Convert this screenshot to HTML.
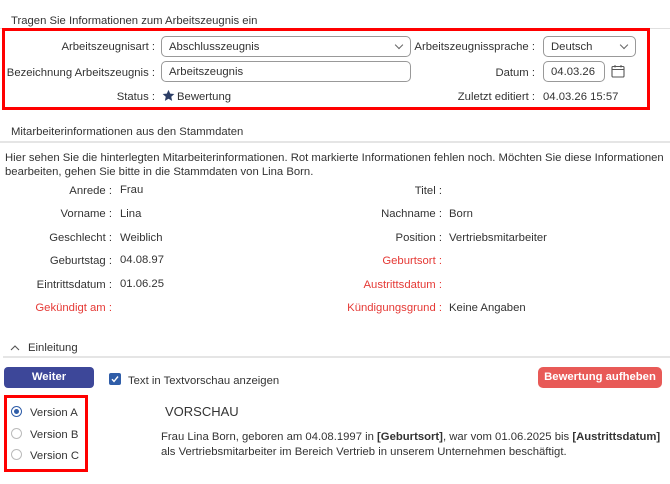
<!DOCTYPE html>
<html><head><meta charset="utf-8"><style>
*{box-sizing:border-box;margin:0;padding:0}
body{width:670px;height:484px;background:#fff;font-family:"Liberation Sans",Arial,sans-serif;font-size:11.3px;color:#333;position:relative;overflow:hidden}
.a{position:absolute;white-space:nowrap;line-height:14px}
.r{text-align:right}
.red{color:#e53935}
.box{position:absolute;border:1px solid #999;border-radius:5px;background:#fff;padding-left:7px;line-height:20px;font-size:11.3px;color:#333}
.chev{position:absolute;right:8px;top:5px;width:6px;height:6px;border-right:1px solid #666;border-bottom:1px solid #666;transform:rotate(45deg)}
.line{position:absolute;height:2px;background:#e5e5e5}
.rb{position:absolute;border:3px solid #f00}
.radio{position:absolute;width:11px;height:11px;border:1px solid #bbb;border-radius:50%;left:11px}
</style></head><body>
<div class="a" style="left:11px;top:14px">Tragen Sie Informationen zum Arbeitszeugnis ein</div>
<div class="line" style="left:0;top:28px;width:670px;height:1px;background:#e0e0e0"></div>
<div class="rb" style="left:2px;top:28px;width:648px;height:82px;background:#fff"></div>

<div class="a r" style="right:515px;top:40px">Arbeitszeugnisart :</div>
<div class="box" style="left:161px;top:36px;width:250px;height:21px">Abschlusszeugnis<span class="chev"></span></div>
<div class="a r" style="right:135px;top:40px">Arbeitszeugnissprache :</div>
<div class="box" style="left:543px;top:36px;width:93px;height:21px">Deutsch<span class="chev"></span></div>

<div class="a r" style="right:515px;top:66px">Bezeichnung Arbeitszeugnis :</div>
<div class="box" style="left:161px;top:61px;width:250px;height:21px">Arbeitszeugnis</div>
<div class="a r" style="right:135px;top:66px">Datum :</div>
<div class="box" style="left:543px;top:61px;width:62px;height:21px">04.03.26</div>
<svg style="position:absolute;left:611px;top:64px" width="14" height="14" viewBox="0 0 14 14"><rect x="1" y="2.5" width="12" height="10.5" rx="1" fill="none" stroke="#555" stroke-width="1.1"/><line x1="1" y1="5.5" x2="13" y2="5.5" stroke="#555"/><line x1="4" y1="1" x2="4" y2="3.5" stroke="#555"/><line x1="10" y1="1" x2="10" y2="3.5" stroke="#555"/></svg>

<div class="a r" style="right:515px;top:90px">Status :</div>
<svg style="position:absolute;left:162px;top:89px" width="13" height="13" viewBox="0 0 24 24"><path d="M12 1.5l3.2 7 7.6.8-5.7 5.1 1.6 7.5L12 18l-6.7 3.9 1.6-7.5L1.2 9.3l7.6-.8z" fill="#2c3e66"/></svg>
<div class="a" style="left:177px;top:90px">Bewertung</div>
<div class="a r" style="right:135px;top:90px">Zuletzt editiert :</div>
<div class="a" style="left:543px;top:90px">04.03.26 15:57</div>

<div class="a" style="left:11px;top:125px">Mitarbeiterinformationen aus den Stammdaten</div>
<div class="line" style="left:0;top:141px;width:670px"></div>
<div class="a" style="left:5px;top:151px">Hier sehen Sie die hinterlegten Mitarbeiterinformationen. Rot markierte Informationen fehlen noch. Möchten Sie diese Informationen</div>
<div class="a" style="left:5px;top:165px">bearbeiten, gehen Sie bitte in die Stammdaten von Lina Born.</div>

<div class="a r" style="right:558px;top:184px">Anrede :</div><div class="a" style="left:120px;top:183px">Frau</div>
<div class="a r" style="right:228px;top:184px">Titel :</div>
<div class="a r" style="right:558px;top:207px">Vorname :</div><div class="a" style="left:120px;top:207px">Lina</div>
<div class="a r" style="right:228px;top:207px">Nachname :</div><div class="a" style="left:449px;top:207px">Born</div>
<div class="a r" style="right:558px;top:231px">Geschlecht :</div><div class="a" style="left:120px;top:231px">Weiblich</div>
<div class="a r" style="right:228px;top:231px">Position :</div><div class="a" style="left:449px;top:231px">Vertriebsmitarbeiter</div>
<div class="a r" style="right:558px;top:254px">Geburtstag :</div><div class="a" style="left:120px;top:253px">04.08.97</div>
<div class="a r red" style="right:228px;top:254px">Geburtsort :</div>
<div class="a r" style="right:558px;top:278px">Eintrittsdatum :</div><div class="a" style="left:120px;top:277px">01.06.25</div>
<div class="a r red" style="right:228px;top:278px">Austrittsdatum :</div>
<div class="a r red" style="right:558px;top:301px">Gekündigt am :</div>
<div class="a r red" style="right:228px;top:301px">Kündigungsgrund :</div><div class="a" style="left:449px;top:301px">Keine Angaben</div>

<svg style="position:absolute;left:10px;top:344px" width="10" height="7" viewBox="0 0 10 7"><path d="M1 6L5 2l4 4" fill="none" stroke="#555" stroke-width="1.1"/></svg>
<div class="a" style="left:28px;top:341px">Einleitung</div>
<div class="line" style="left:3px;top:356px;width:667px"></div>

<div style="position:absolute;left:4px;top:367px;width:90px;height:21px;background:#3d4799;border-radius:4px;color:#fff;font-weight:bold;text-align:center;line-height:21px">Weiter</div>
<svg style="position:absolute;left:109px;top:373px" width="12" height="12" viewBox="0 0 12 12"><rect width="12" height="12" rx="2" fill="#2f5da8"/><path d="M3 6.2l2 2.2L9 3.5" fill="none" stroke="#fff" stroke-width="1.4"/></svg>
<div class="a" style="left:128px;top:374px">Text in Textvorschau anzeigen</div>
<div style="position:absolute;left:538px;top:367px;width:124px;height:21px;background:#e85a57;border-radius:5px;color:#fff;font-weight:bold;text-align:center;line-height:21px">Bewertung aufheben</div>

<div class="rb" style="left:4px;top:395px;width:84px;height:77px"></div>
<div class="radio" style="top:406px;border-color:#2f5da8"><div style="position:absolute;left:2px;top:2px;width:5px;height:5px;border-radius:50%;background:#2f5da8"></div></div>
<div class="a" style="left:30px;top:406px">Version A</div>
<div class="radio" style="top:428px"></div>
<div class="a" style="left:30px;top:428px">Version B</div>
<div class="radio" style="top:449px"></div>
<div class="a" style="left:30px;top:449px">Version C</div>

<div class="a" style="left:165px;top:404px;font-size:13px;line-height:15px">VORSCHAU</div>
<div class="a" style="left:161px;top:430px">Frau Lina Born, geboren am 04.08.1997 in <b>[Geburtsort]</b>, war vom 01.06.2025 bis <b>[Austrittsdatum]</b></div>
<div class="a" style="left:161px;top:445px">als Vertriebsmitarbeiter im Bereich Vertrieb in unserem Unternehmen beschäftigt.</div>
</body></html>
